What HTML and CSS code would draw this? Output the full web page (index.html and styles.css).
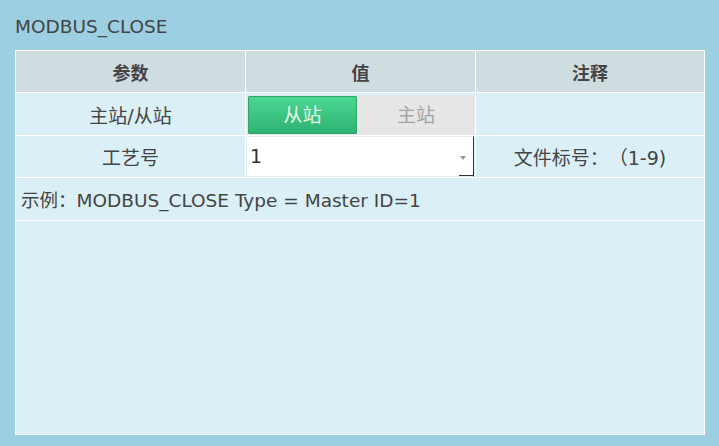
FILE: index.html
```html
<!DOCTYPE html>
<html lang="zh-CN">
<head>
    <meta charset="UTF-8">
    <meta name="viewport" content="width=device-width, initial-scale=1.0">
    <title>MODBUS_CLOSE</title>
    <link rel="stylesheet" href="styles.css">
</head>
<body>
    <div class="panel">
        <div class="title">MODBUS_CLOSE</div>
        <table class="params">
            <colgroup>
                <col class="col-name">
                <col class="col-value">
                <col class="col-note">
            </colgroup>
            <thead>
                <tr class="head-row">
                    <th>参数</th>
                    <th>值</th>
                    <th>注释</th>
                </tr>
            </thead>
            <tbody>
                <tr class="row-a">
                    <td>主站/从站</td>
                    <td class="value-cell">
                        <div class="toggle">
                            <span class="toggle-on">从站</span>
                            <span class="toggle-off">主站</span>
                        </div>
                    </td>
                    <td></td>
                </tr>
                <tr class="row-b">
                    <td>工艺号</td>
                    <td class="value-cell">
                        <div class="select-box">
                            <span class="select-text">1</span>
                            <span class="select-arrow"></span>
                        </div>
                    </td>
                    <td>文件标号：（1-9)</td>
                </tr>
                <tr class="row-a">
                    <td colspan="3" class="example">示例：MODBUS_CLOSE Type = Master ID=1</td>
                </tr>
                <tr class="row-fill">
                    <td colspan="3"></td>
                </tr>
            </tbody>
        </table>
    </div>
</body>
</html>
```

FILE: styles.css
```css
body {
    margin: 0;
    padding: 0;
    background: #9ccfe1;
    color: #444;
    font-family: "DejaVu Sans", "Noto Sans CJK SC", sans-serif;
    text-spacing-trim: space-all;
}
.panel {
    padding: 0 15px;
}
.title {
    padding-top: 10px;
    height: 50px;
    line-height: 34px;
    font-size: 18.5px;
    color: #444;
    box-sizing: border-box;
}
.params {
    width: 690px;
    table-layout: fixed;
    border-collapse: separate;
    border-spacing: 1px;
    background: #fff;
}
.col-name {
    width: 229px;
}
.col-value {
    width: 229px;
}
.col-note {
    width: 228px;
}
.params th,
.params td {
    padding: 0;
    text-align: center;
    font-size: 19px;
    vertical-align: middle;
}
.params th {
    background: #d0dde0;
    height: 41px;
    font-size: 18px;
    font-weight: bold;
    color: #444;
}
.params td {
    background: #daf0f6;
}
.row-a td {
    height: 42px;
}
.row-b td {
    height: 41px;
}
.row-fill td {
    height: 213px;
}
.params .example {
    text-align: left;
    padding-left: 5px;
    font-size: 18.5px;
}
.value-cell {
    position: relative;
}
.toggle {
    display: flex;
    height: 40px;
    margin-top: 1px;
    padding: 1px 0 1px 2px;
    box-sizing: border-box;
    background: #e6e6e6;
}
.toggle-on {
    width: 109px;
    box-sizing: border-box;
    line-height: 36px;
    color: #e9fbe9;
    background: linear-gradient(#4bd793, #2fb272);
    border: 1px solid #2ea468;
    border-radius: 1px;
}
.toggle-off {
    flex: 1;
    line-height: 38px;
    color: #a3a3a3;
}
.select-box {
    position: relative;
    height: 41px;
    margin-right: 1px;
    background: #fff;
    border: 1px solid #e2eef2;
    border-right: 1px solid #333;
    box-sizing: border-box;
    text-align: left;
    line-height: 39px;
    padding-left: 3px;
    color: #333;
}
.select-box::after {
    content: "";
    position: absolute;
    right: -1px;
    bottom: 0;
    width: 15px;
    border-bottom: 1px solid #333;
}
.select-arrow {
    position: absolute;
    right: 7px;
    top: 19px;
    border-left: 3px solid transparent;
    border-right: 3px solid transparent;
    border-top: 4px solid #999;
}
```
